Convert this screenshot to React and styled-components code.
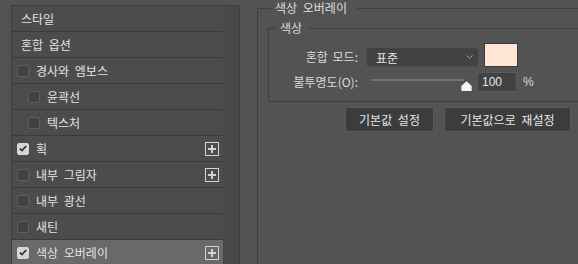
import React from 'react';
import styled, { createGlobalStyle } from 'styled-components';

const Global = createGlobalStyle`
  html, body { margin: 0; padding: 0; background: #535353; overflow: hidden; }
  body {
    font-family: "Noto Sans CJK KR", "Noto Sans", sans-serif;
    font-size: 12px;
    color: #e3e3e3;
    word-spacing: 3px;
  }
  * { box-sizing: border-box; }
`;

const Page = styled.div`
  display: flex;
  align-items: flex-start;
  width: 578px;
  height: 264px;
  overflow: hidden;
`;

const StylePanel = styled.div`
  flex-shrink: 0;
  display: flex;
  margin: 5px 0 0 11px;
  width: 229px;
  height: 320px;
  border: 1px solid #3d3d3d;
`;

const StyleList = styled.div`
  width: 211px;
  display: flex;
  flex-direction: column;
`;

const Track = styled.div`
  width: 16px;
  background: #484848;
`;

const Row = styled.div`
  display: flex;
  align-items: center;
  height: 26px;
  padding: 0 4px 0 ${p => p.$pad}px;
  border-bottom: 1px solid #3b3b3b;
  background: ${p => (p.$selected ? '#696969' : '#4c4c4c')};
  line-height: 14px;
  white-space: nowrap;
`;

const Box = styled.span`
  display: inline-flex;
  align-items: center;
  justify-content: center;
  width: 12px;
  height: 12px;
  margin-right: 7px;
  border-radius: 2px;
  background: ${p => (p.$checked ? '#d6d6d6' : '#414141')};
  border: 1px solid ${p => (p.$checked ? '#d6d6d6' : '#5d5d5d')};
`;

const PlusBox = styled.span`
  margin-left: auto;
  display: inline-flex;
  width: 14px;
  height: 14px;
`;

const Options = styled.div`
  flex-shrink: 0;
  margin-left: 17px;
  width: 420px;
`;

const Group = styled.fieldset`
  margin: 1px 0 0 0;
  padding: 0 0 200px 0;
  border: 1px solid #3f3f3f;
  min-width: 0;
`;

const Legend = styled.legend`
  margin-left: ${p => p.$ml}px;
  padding: 0 ${p => p.$pr}px 0 4px;
  line-height: 14px;
  font-size: 12px;
  color: #dedede;
`;

const SubGroup = styled.fieldset`
  margin: 6px 0 0 10px;
  padding: 8px 0 9px 0;
  border: 1px solid #3f3f3f;
  min-width: 0;
`;

const FieldRow = styled.div`
  display: flex;
  align-items: ${p => p.$align || 'center'};
  margin-top: ${p => p.$mt || 0}px;
`;

const Label = styled.span`
  width: 89px;
  text-align: right;
  line-height: 20px;
  color: #dcdcdc;
  white-space: nowrap;
  word-spacing: 2px;
`;

const Select = styled.div`
  display: flex;
  align-items: center;
  justify-content: space-between;
  margin-left: 8px;
  width: 113px;
  height: 20px;
  padding: 0 5px 0 9px;
  border-radius: 3px;
  background: #424242;
  border: 1px solid #4e4e4e;
  color: #e6e6e6;
`;

const Swatch = styled.div`
  margin-left: 5px;
  width: 34px;
  height: 24px;
  background: #ffe6d4;
  border: 1px solid #3a3a3a;
`;

const Slider = styled.div`
  position: relative;
  margin-left: 13px;
  width: 101px;
  height: 20px;
`;

const SliderTrack = styled.div`
  margin-top: 7px;
  width: 93px;
  height: 2px;
  background: #737373;
`;

const Thumb = styled.svg`
  position: absolute;
  left: 90px;
  top: 9px;
`;

const NumInput = styled.div`
  margin-left: 5px;
  width: 40px;
  height: 20px;
  padding-left: 4px;
  line-height: 18px;
  background: #424242;
  border: 1px solid #5a5a5a;
  color: #e6e6e6;
  font-family: "Liberation Sans", "Noto Sans", sans-serif;
  font-size: 12px;
`;

const Unit = styled.span`
  margin-left: 6px;
  font-family: "Liberation Sans", sans-serif;
  font-size: 12px;
  color: #dcdcdc;
`;

const Buttons = styled.div`
  display: flex;
  gap: 10px;
  margin-top: 5px;
  padding-left: 87px;
`;

const Button = styled.div`
  width: ${p => p.$w}px;
  height: 25px;
  display: flex;
  align-items: center;
  justify-content: center;
  border-radius: 3px;
  background: #3c3c3c;
  border: 1px solid #5a5a5a;
  color: #e6e6e6;
  white-space: nowrap;
`;

const Check = () => (
  <svg width="8" height="7" viewBox="0 0 8 7">
    <path d="M0.8 3.6 L3 5.6 L7.2 1" fill="none" stroke="#333" strokeWidth="1.8" />
  </svg>
);

const Plus = () => (
  <svg width="14" height="14" viewBox="0 0 14 14">
    <rect x="0.5" y="0.5" width="13" height="13" fill="none" stroke="#d2d2d2" />
    <rect x="3" y="6" width="8" height="2" fill="#d2d2d2" />
    <rect x="6" y="3" width="2" height="8" fill="#d2d2d2" />
  </svg>
);

const items = [
  { label: '스타일', pad: 9 },
  { label: '혼합 옵션', pad: 9 },
  { label: '경사와 엠보스', pad: 5, box: true },
  { label: '윤곽선', pad: 16, box: true },
  { label: '텍스처', pad: 16, box: true },
  { label: '획', pad: 5, box: true, checked: true, plus: true },
  { label: '내부 그림자', pad: 5, box: true, plus: true },
  { label: '내부 광선', pad: 5, box: true },
  { label: '새틴', pad: 5, box: true },
  { label: '색상 오버레이', pad: 5, box: true, checked: true, plus: true, selected: true },
];

export default function App() {
  return (
    <Page>
      <Global />
      <StylePanel>
        <StyleList>
          {items.map(it => (
            <Row key={it.label} $pad={it.pad} $selected={it.selected}>
              {it.box && <Box $checked={it.checked}>{it.checked && <Check />}</Box>}
              <span>{it.label}</span>
              {it.plus && (
                <PlusBox>
                  <Plus />
                </PlusBox>
              )}
            </Row>
          ))}
        </StyleList>
        <Track />
      </StylePanel>
      <Options>
        <Group>
          <Legend $ml={13} $pr={10}>색상 오버레이</Legend>
          <SubGroup>
            <Legend $ml={7} $pr={7}>색상</Legend>
            <FieldRow $align="flex-end">
              <Label>혼합 모드:</Label>
              <Select>
                <span>표준</span>
                <svg width="7" height="4" viewBox="0 0 7 4">
                  <path d="M0.5 0.5 L3.5 3.3 L6.5 0.5" fill="none" stroke="#a0a0a0" strokeWidth="1" />
                </svg>
              </Select>
              <Swatch />
            </FieldRow>
            <FieldRow $mt={5}>
              <Label>불투명도(O):</Label>
              <Slider>
                <SliderTrack />
                <Thumb width="11" height="10" viewBox="0 0 11 10">
                  <path d="M5.5 0.3 L10.7 5 L10.7 9.5 Q10.7 10 10.2 10 L0.8 10 Q0.3 10 0.3 9.5 L0.3 5 Z" fill="#f4f4f4" />
                </Thumb>
              </Slider>
              <NumInput>100</NumInput>
              <Unit>%</Unit>
            </FieldRow>
          </SubGroup>
          <Buttons>
            <Button $w={89}>기본값 설정</Button>
            <Button $w={127}>기본값으로 재설정</Button>
          </Buttons>
        </Group>
      </Options>
    </Page>
  );
}
